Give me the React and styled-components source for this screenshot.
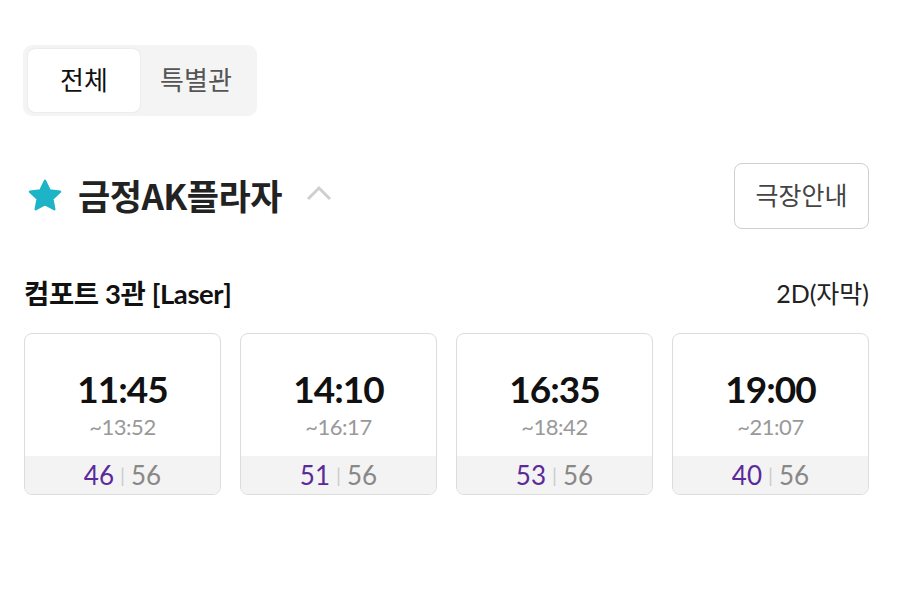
import React from "react";
import styled, { createGlobalStyle } from "styled-components";

const Global = createGlobalStyle`
  html, body { margin: 0; padding: 0; background: #fff; }
  body { font-family: Lato, "Noto Sans CJK KR", "Noto Sans", sans-serif; }
  * { box-sizing: border-box; }
`;

const Page = styled.div`
  width: 900px;
  padding: 45px 31px 0 23px;
`;

const Tabs = styled.div`
  display: inline-flex;
  padding: 4px 5px;
  background: #f4f4f4;
  border-radius: 9px;
`;

const Tab = styled.div`
  width: 112px;
  height: 63px;
  display: flex;
  align-items: center;
  justify-content: center;
  padding-bottom: 5px;
  border-radius: 7px;
  font-family: "Noto Sans CJK KR", sans-serif;
  font-size: 26px;
  color: ${(p) => (p.$active ? "#111" : "#555")};
  background: ${(p) => (p.$active ? "#fff" : "transparent")};
  box-shadow: ${(p) => (p.$active ? "0 0 2px rgba(0,0,0,0.12)" : "none")};
`;

const Header = styled.div`
  display: flex;
  align-items: center;
  justify-content: space-between;
  margin-top: 47px;
  padding-left: 4px;
`;

const Title = styled.div`
  display: flex;
  align-items: center;
`;

const Name = styled.h2`
  margin: -4px 0 0 15px;
  font-family: "Noto Sans CJK KR", sans-serif;
  font-weight: 700;
  font-size: 35px;
  color: #222;
  letter-spacing: -0.5px;
`;

const Chevron = styled.svg`
  margin-left: 24px;
  margin-top: -6px;
`;

const InfoButton = styled.button`
  width: 135px;
  height: 66px;
  border: 1.5px solid #cfcfcf;
  border-radius: 8px;
  background: #fff;
  font-family: "Noto Sans CJK KR", sans-serif;
  font-size: 25px;
  color: #444;
  padding: 0 0 4px;
`;

const HallRow = styled.div`
  display: flex;
  justify-content: space-between;
  align-items: center;
  margin-top: 43px;
  padding-left: 1px;
`;

const HallName = styled.div`
  font-family: Lato, "Noto Sans CJK KR", sans-serif;
  font-weight: 700;
  font-size: 27.5px;
  color: #111;
  letter-spacing: -0.4px;
`;

const Format = styled.div`
  font-family: Lato, "Noto Sans CJK KR", sans-serif;
  font-size: 25px;
  color: #222;
`;

const Cards = styled.div`
  display: grid;
  grid-template-columns: repeat(4, 1fr);
  gap: 19px;
  margin-top: 21px;
  padding-left: 1px;
`;

const Card = styled.div`
  height: 162px;
  border: 1.5px solid #dcdcdc;
  border-radius: 8px;
  overflow: hidden;
  display: flex;
  flex-direction: column;
`;

const Times = styled.div`
  flex: 1;
  display: flex;
  flex-direction: column;
  align-items: center;
  justify-content: center;
  padding-top: 20px;
`;

const Start = styled.div`
  font-family: Lato, sans-serif;
  font-weight: 700;
  font-size: 37px;
  color: #111;
  line-height: 40px;
  letter-spacing: -1px;
`;

const End = styled.div`
  font-family: Lato, sans-serif;
  font-size: 22px;
  color: #999;
  line-height: 28px;
  margin-top: 4px;
  letter-spacing: -0.5px;
`;

const Seats = styled.div`
  height: 38px;
  background: #f3f3f3;
  display: flex;
  align-items: center;
  justify-content: center;
  font-family: Lato, sans-serif;
  font-size: 26px;
`;

const Left = styled.span`
  color: #5b2a9a;
`;

const Sep = styled.span`
  color: #ccc;
  font-size: 20px;
  margin: 0 6px;
`;

const Total = styled.span`
  color: #888;
`;

const shows = [
  { s: "11:45", e: "~13:52", l: 46 },
  { s: "14:10", e: "~16:17", l: 51 },
  { s: "16:35", e: "~18:42", l: 53 },
  { s: "19:00", e: "~21:07", l: 40 },
];

export default function App() {
  return (
    <>
      <Global />
      <Page>
        <Tabs>
          <Tab $active>전체</Tab>
          <Tab>특별관</Tab>
        </Tabs>
        <Header>
          <Title>
            <svg width="36" height="34" viewBox="0 0 24 23">
              <path
                d="M12 1.2l3.1 6.5 7.1.9-5.2 4.9 1.3 7-6.3-3.4-6.3 3.4 1.3-7L1.8 8.6l7.1-.9z"
                fill="#1eb4c8"
                stroke="#1eb4c8"
                strokeWidth="1.6"
                strokeLinejoin="round"
              />
            </svg>
            <Name>금정AK플라자</Name>
            <Chevron width="26" height="16" viewBox="0 0 26 16">
              <path d="M2 14L13 3l11 11" fill="none" stroke="#cfcfcf" strokeWidth="3" />
            </Chevron>
          </Title>
          <InfoButton>극장안내</InfoButton>
        </Header>
        <HallRow>
          <HallName>컴포트 3관 [Laser]</HallName>
          <Format>2D(자막)</Format>
        </HallRow>
        <Cards>
          {shows.map((x) => (
            <Card key={x.s}>
              <Times>
                <Start>{x.s}</Start>
                <End>{x.e}</End>
              </Times>
              <Seats>
                <Left>{x.l}</Left>
                <Sep>|</Sep>
                <Total>56</Total>
              </Seats>
            </Card>
          ))}
        </Cards>
      </Page>
    </>
  );
}
